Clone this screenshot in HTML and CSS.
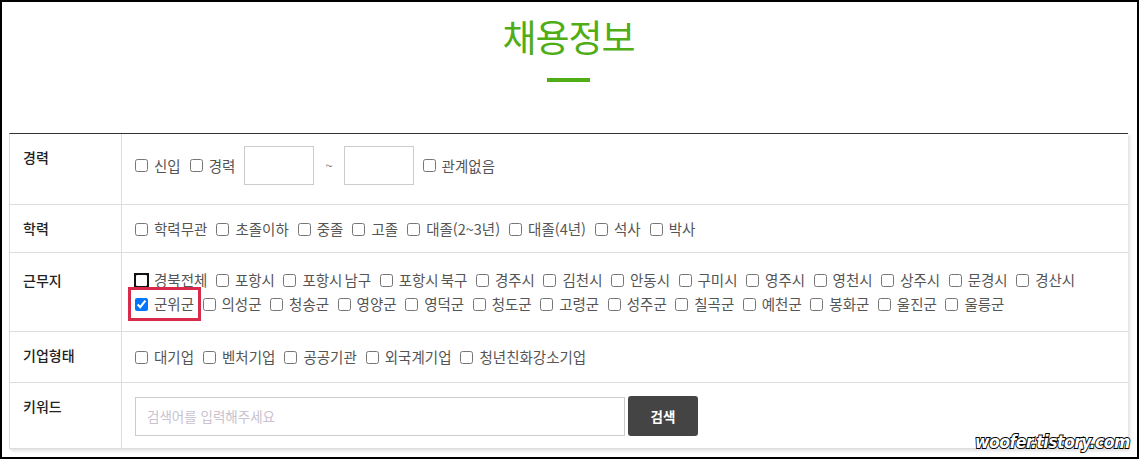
FILE: index.html
```html
<!DOCTYPE html>
<html lang="ko">
<head>
<meta charset="utf-8">
<title>채용정보</title>
<link rel="stylesheet" href="styles.css">
</head>
<body>
<div class="frame">
  <h1 class="title">채용정보</h1>
  <div class="title-bar"></div>

  <div class="board">
    <div class="row row-career">
      <div class="th">경력</div>
      <div class="td">
        <label class="opt"><input type="checkbox"><span>신입</span></label>
        <label class="opt"><input type="checkbox"><span>경력</span></label>
        <input type="text" class="year">
        <span class="tilde">~</span>
        <input type="text" class="year">
        <label class="opt"><input type="checkbox"><span>관계없음</span></label>
      </div>
    </div>

    <div class="row row-edu">
      <div class="th">학력</div>
      <div class="td">
        <label class="opt"><input type="checkbox"><span>학력무관</span></label>
        <label class="opt"><input type="checkbox"><span>초졸이하</span></label>
        <label class="opt"><input type="checkbox"><span>중졸</span></label>
        <label class="opt"><input type="checkbox"><span>고졸</span></label>
        <label class="opt"><input type="checkbox"><span>대졸(2~3년)</span></label>
        <label class="opt"><input type="checkbox"><span>대졸(4년)</span></label>
        <label class="opt"><input type="checkbox"><span>석사</span></label>
        <label class="opt"><input type="checkbox"><span>박사</span></label>
      </div>
    </div>

    <div class="row row-area">
      <div class="th">근무지</div>
      <div class="td">
        <label class="opt"><input type="checkbox" class="focused"><span>경북전체</span></label>
        <label class="opt"><input type="checkbox"><span>포항시</span></label>
        <label class="opt"><input type="checkbox"><span class="tight">포항시 남구</span></label>
        <label class="opt"><input type="checkbox"><span class="tight">포항시 북구</span></label>
        <label class="opt"><input type="checkbox"><span>경주시</span></label>
        <label class="opt"><input type="checkbox"><span>김천시</span></label>
        <label class="opt"><input type="checkbox"><span>안동시</span></label>
        <label class="opt"><input type="checkbox"><span>구미시</span></label>
        <label class="opt"><input type="checkbox"><span>영주시</span></label>
        <label class="opt"><input type="checkbox"><span>영천시</span></label>
        <label class="opt"><input type="checkbox"><span>상주시</span></label>
        <label class="opt"><input type="checkbox"><span>문경시</span></label>
        <label class="opt"><input type="checkbox"><span>경산시</span></label>
        <label class="opt marked"><input type="checkbox" checked><span>군위군</span></label>
        <label class="opt"><input type="checkbox"><span>의성군</span></label>
        <label class="opt"><input type="checkbox"><span>청송군</span></label>
        <label class="opt"><input type="checkbox"><span>영양군</span></label>
        <label class="opt"><input type="checkbox"><span>영덕군</span></label>
        <label class="opt"><input type="checkbox"><span>청도군</span></label>
        <label class="opt"><input type="checkbox"><span>고령군</span></label>
        <label class="opt"><input type="checkbox"><span>성주군</span></label>
        <label class="opt"><input type="checkbox"><span>칠곡군</span></label>
        <label class="opt"><input type="checkbox"><span>예천군</span></label>
        <label class="opt"><input type="checkbox"><span>봉화군</span></label>
        <label class="opt"><input type="checkbox"><span>울진군</span></label>
        <label class="opt"><input type="checkbox"><span>울릉군</span></label>
      </div>
    </div>

    <div class="row row-type">
      <div class="th">기업형태</div>
      <div class="td">
        <label class="opt"><input type="checkbox"><span>대기업</span></label>
        <label class="opt"><input type="checkbox"><span>벤처기업</span></label>
        <label class="opt"><input type="checkbox"><span>공공기관</span></label>
        <label class="opt"><input type="checkbox"><span>외국계기업</span></label>
        <label class="opt"><input type="checkbox"><span>청년친화강소기업</span></label>
      </div>
    </div>

    <div class="row row-keyword">
      <div class="th">키워드</div>
      <div class="td">
        <input type="text" class="keyword" placeholder="검색어를 입력해주세요">
        <button type="button" class="search-btn">검색</button>
      </div>
    </div>
  </div>

  <div class="watermark">woofer.tistory.com</div>
</div>
</body>
</html>
```

FILE: styles.css
```css
* {
  box-sizing: border-box;
}

html, body {
  margin: 0;
  padding: 0;
  background: #fff;
}

body {
  font-family: "Noto Sans CJK KR", "Noto Sans", sans-serif;
  font-size: 14px;
  color: #222;
}

.frame {
  position: relative;
  width: 1139px;
  height: 459px;
  border: 2px solid #000;
  padding: 0 9px 0 7px;
  overflow: hidden;
}

.title {
  margin: 0;
  padding-top: 9px;
  font-size: 37px;
  line-height: 50px;
  font-weight: 400;
  text-align: center;
  color: #4fad16;
  letter-spacing: -1px;
}

.title-bar {
  width: 43px;
  height: 4px;
  margin: 17px auto 0;
  background: #4fad16;
}

.board {
  margin-top: 51px;
  border-top: 1px solid #333;
  border-left: 1px solid #ddd;
  box-shadow: 2px 2px 3px rgba(0, 0, 0, 0.12);
}

.row {
  display: grid;
  grid-template-columns: 112px 1fr;
  border-bottom: 1px solid #ddd;
}

.th {
  padding: 13px 0 0 13px;
  line-height: 20px;
  font-weight: 500;
  color: #222;
  border-right: 1px solid #ddd;
}

.td {
  display: flex;
  flex-wrap: wrap;
  align-items: center;
  column-gap: 9px;
  row-gap: 4px;
  padding-left: 13px;
  padding-right: 10px;
}

.row-career .td {
  padding-top: 12px;
  padding-bottom: 19px;
}

.row-edu .td {
  padding-top: 14px;
  padding-bottom: 13px;
}

.row-area .th {
  padding-top: 17px;
}

.row-area .td {
  padding-top: 17px;
  padding-bottom: 17px;
  column-gap: 8.5px;
}

.row-type .td {
  padding-top: 15px;
  padding-bottom: 15px;
}

.row-keyword .td {
  padding-top: 13px;
  padding-bottom: 12px;
  column-gap: 3px;
}

.opt {
  display: inline-flex;
  align-items: center;
  gap: 6px;
  height: 20px;
  line-height: 20px;
  font-size: 14.5px;
  color: #555;
  white-space: nowrap;
}

.opt .tight {
  word-spacing: -2px;
}

.opt input {
  width: 13px;
  height: 13px;
  margin: 0;
}

.opt input.focused {
  outline: 2px solid #111;
  outline-offset: -1px;
  border-radius: 3px;
}

.marked {
  outline: 3px solid #d82a4a;
  outline-offset: 4px;
}

.year {
  width: 70px;
  height: 39px;
  border: 1px solid #ccc;
  margin: 0;
  padding: 0 6px;
}

.tilde {
  color: #777;
  font-size: 13px;
  padding: 0 2px;
}

.keyword {
  width: 490px;
  height: 39px;
  margin: 0;
  border: 1px solid #ccc;
  padding: 0 11px;
  font-family: inherit;
  font-size: 13.5px;
  color: #333;
}

.keyword::placeholder {
  color: #c9c2d0;
}

.search-btn {
  width: 70px;
  height: 40px;
  border: 0;
  border-radius: 3px;
  background: #444;
  color: #fff;
  font-family: inherit;
  font-size: 13.5px;
  font-weight: 700;
}

.watermark {
  position: absolute;
  right: 7px;
  bottom: 4px;
  font-family: "DejaVu Sans", sans-serif;
  font-weight: 700;
  font-style: italic;
  font-size: 18px;
  line-height: 22px;
  letter-spacing: -0.6px;
  color: #fff;
  -webkit-text-stroke: 2px #000;
  paint-order: stroke fill;
  transform: scaleX(0.87);
  transform-origin: right bottom;
}
```
